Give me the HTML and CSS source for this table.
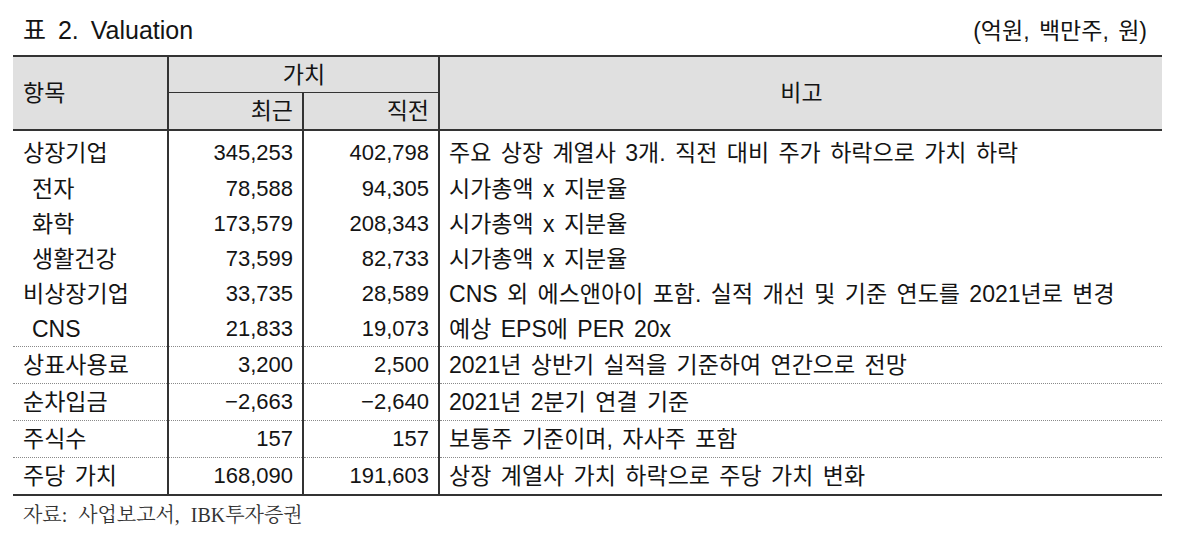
FILE: index.html
```html
<!DOCTYPE html>
<html lang="ko">
<head>
<meta charset="utf-8">
<title>표 2. Valuation</title>
<link rel="stylesheet" href="styles.css">
</head>
<body>
<div class="page">
  <div class="title-bar">
    <div class="title">표 2. Valuation</div>
    <div class="unit">(억원, 백만주, 원)</div>
  </div>
  <table class="valuation">
    <colgroup>
      <col class="c-item">
      <col class="c-num">
      <col class="c-num2">
      <col class="c-note">
    </colgroup>
    <thead>
      <tr class="h1">
        <th rowspan="2" class="item">항목</th>
        <th colspan="2" class="group">가치</th>
        <th rowspan="2" class="note-h">비고</th>
      </tr>
      <tr class="h2">
        <th class="num-h">최근</th>
        <th class="num-h">직전</th>
      </tr>
    </thead>
    <tbody>
      <tr class="first">
        <td class="item">상장기업</td><td class="num">345,253</td><td class="num">402,798</td><td class="note">주요 상장 계열사 3개. 직전 대비 주가 하락으로 가치 하락</td>
      </tr>
      <tr>
        <td class="item sub">전자</td><td class="num">78,588</td><td class="num">94,305</td><td class="note">시가총액 x 지분율</td>
      </tr>
      <tr>
        <td class="item sub">화학</td><td class="num">173,579</td><td class="num">208,343</td><td class="note">시가총액 x 지분율</td>
      </tr>
      <tr>
        <td class="item sub">생활건강</td><td class="num">73,599</td><td class="num">82,733</td><td class="note">시가총액 x 지분율</td>
      </tr>
      <tr>
        <td class="item">비상장기업</td><td class="num">33,735</td><td class="num">28,589</td><td class="note">CNS 외 에스앤아이 포함. 실적 개선 및 기준 연도를 2021년로 변경</td>
      </tr>
      <tr>
        <td class="item sub">CNS</td><td class="num">21,833</td><td class="num">19,073</td><td class="note">예상 EPS에 PER 20x</td>
      </tr>
      <tr class="dot">
        <td class="item">상표사용료</td><td class="num">3,200</td><td class="num">2,500</td><td class="note">2021년 상반기 실적을 기준하여 연간으로 전망</td>
      </tr>
      <tr class="dot">
        <td class="item">순차입금</td><td class="num">&minus;2,663</td><td class="num">&minus;2,640</td><td class="note">2021년 2분기 연결 기준</td>
      </tr>
      <tr class="dot">
        <td class="item">주식수</td><td class="num">157</td><td class="num">157</td><td class="note">보통주 기준이며, 자사주 포함</td>
      </tr>
      <tr class="dot">
        <td class="item">주당 가치</td><td class="num">168,090</td><td class="num">191,603</td><td class="note">상장 계열사 가치 하락으로 주당 가치 변화</td>
      </tr>
    </tbody>
  </table>
  <div class="source">자료: 사업보고서, IBK투자증권</div>
</div>
</body>
</html>
```

FILE: styles.css
```css
html, body {
  margin: 0;
  padding: 0;
  background: #ffffff;
}

.page {
  padding: 0 0 0 13px;
  width: 1149px;
  color: #141414;
  font-family: "Liberation Sans", "Noto Sans CJK KR", sans-serif;
}

.title-bar {
  display: flex;
  justify-content: space-between;
  align-items: baseline;
  height: 55px;
  box-sizing: border-box;
  padding: 14px 15px 0 10px;
}

.title {
  font-size: 25px;
  line-height: 32px;
  word-spacing: 5px;
}

.unit {
  font-size: 23px;
  line-height: 32px;
  word-spacing: 3px;
}

.valuation {
  border-collapse: collapse;
  table-layout: fixed;
  width: 1149px;
  border-top: 2px solid #333333;
  border-bottom: 2px solid #333333;
  font-size: 23px;
  word-spacing: 3px;
}

.c-item { width: 155px; }
.c-num { width: 135px; }
.c-num2 { width: 136px; }
.c-note { width: 723px; }

.valuation th,
.valuation td {
  padding: 0 9px 0 10px;
  border-left: 2px solid #333333;
  font-weight: normal;
  white-space: nowrap;
  line-height: 26px;
  vertical-align: middle;
}

.valuation th.item,
.valuation td.item {
  border-left: none;
  text-align: left;
}

.valuation thead th {
  background: #e0e0e0;
}

.valuation thead tr.h1 th {
  height: 35px;
}

.valuation thead tr.h2 th {
  height: 36px;
}

.valuation thead tr.h1 th.item,
.valuation thead tr.h1 th.note-h,
.valuation thead tr.h2 th {
  border-bottom: 2px solid #333333;
}

.valuation th.group {
  text-align: center;
  border-bottom: 1px solid #333333;
}

.valuation th.note-h {
  text-align: center;
}

.valuation th.num-h {
  text-align: right;
}

.valuation td.num {
  text-align: right;
  font-size: 22px;
  word-spacing: 0;
}

.valuation td.note {
  padding-left: 9px;
  text-align: left;
}

.valuation td.sub {
  padding-left: 19px;
}

.valuation tbody td {
  height: 35px;
}

.valuation tbody tr.first td {
  height: 37px;
  padding-top: 3px;
}

.valuation tbody tr.dot td {
  height: 36px;
  border-top: 1px dotted #8a8a8a;
}

.source {
  padding: 6px 0 0 10px;
  font-family: "Liberation Serif", "Noto Serif CJK KR", "Noto Sans CJK KR", serif;
  font-size: 20px;
  line-height: 26px;
  word-spacing: 6px;
  color: #333333;
}
```
